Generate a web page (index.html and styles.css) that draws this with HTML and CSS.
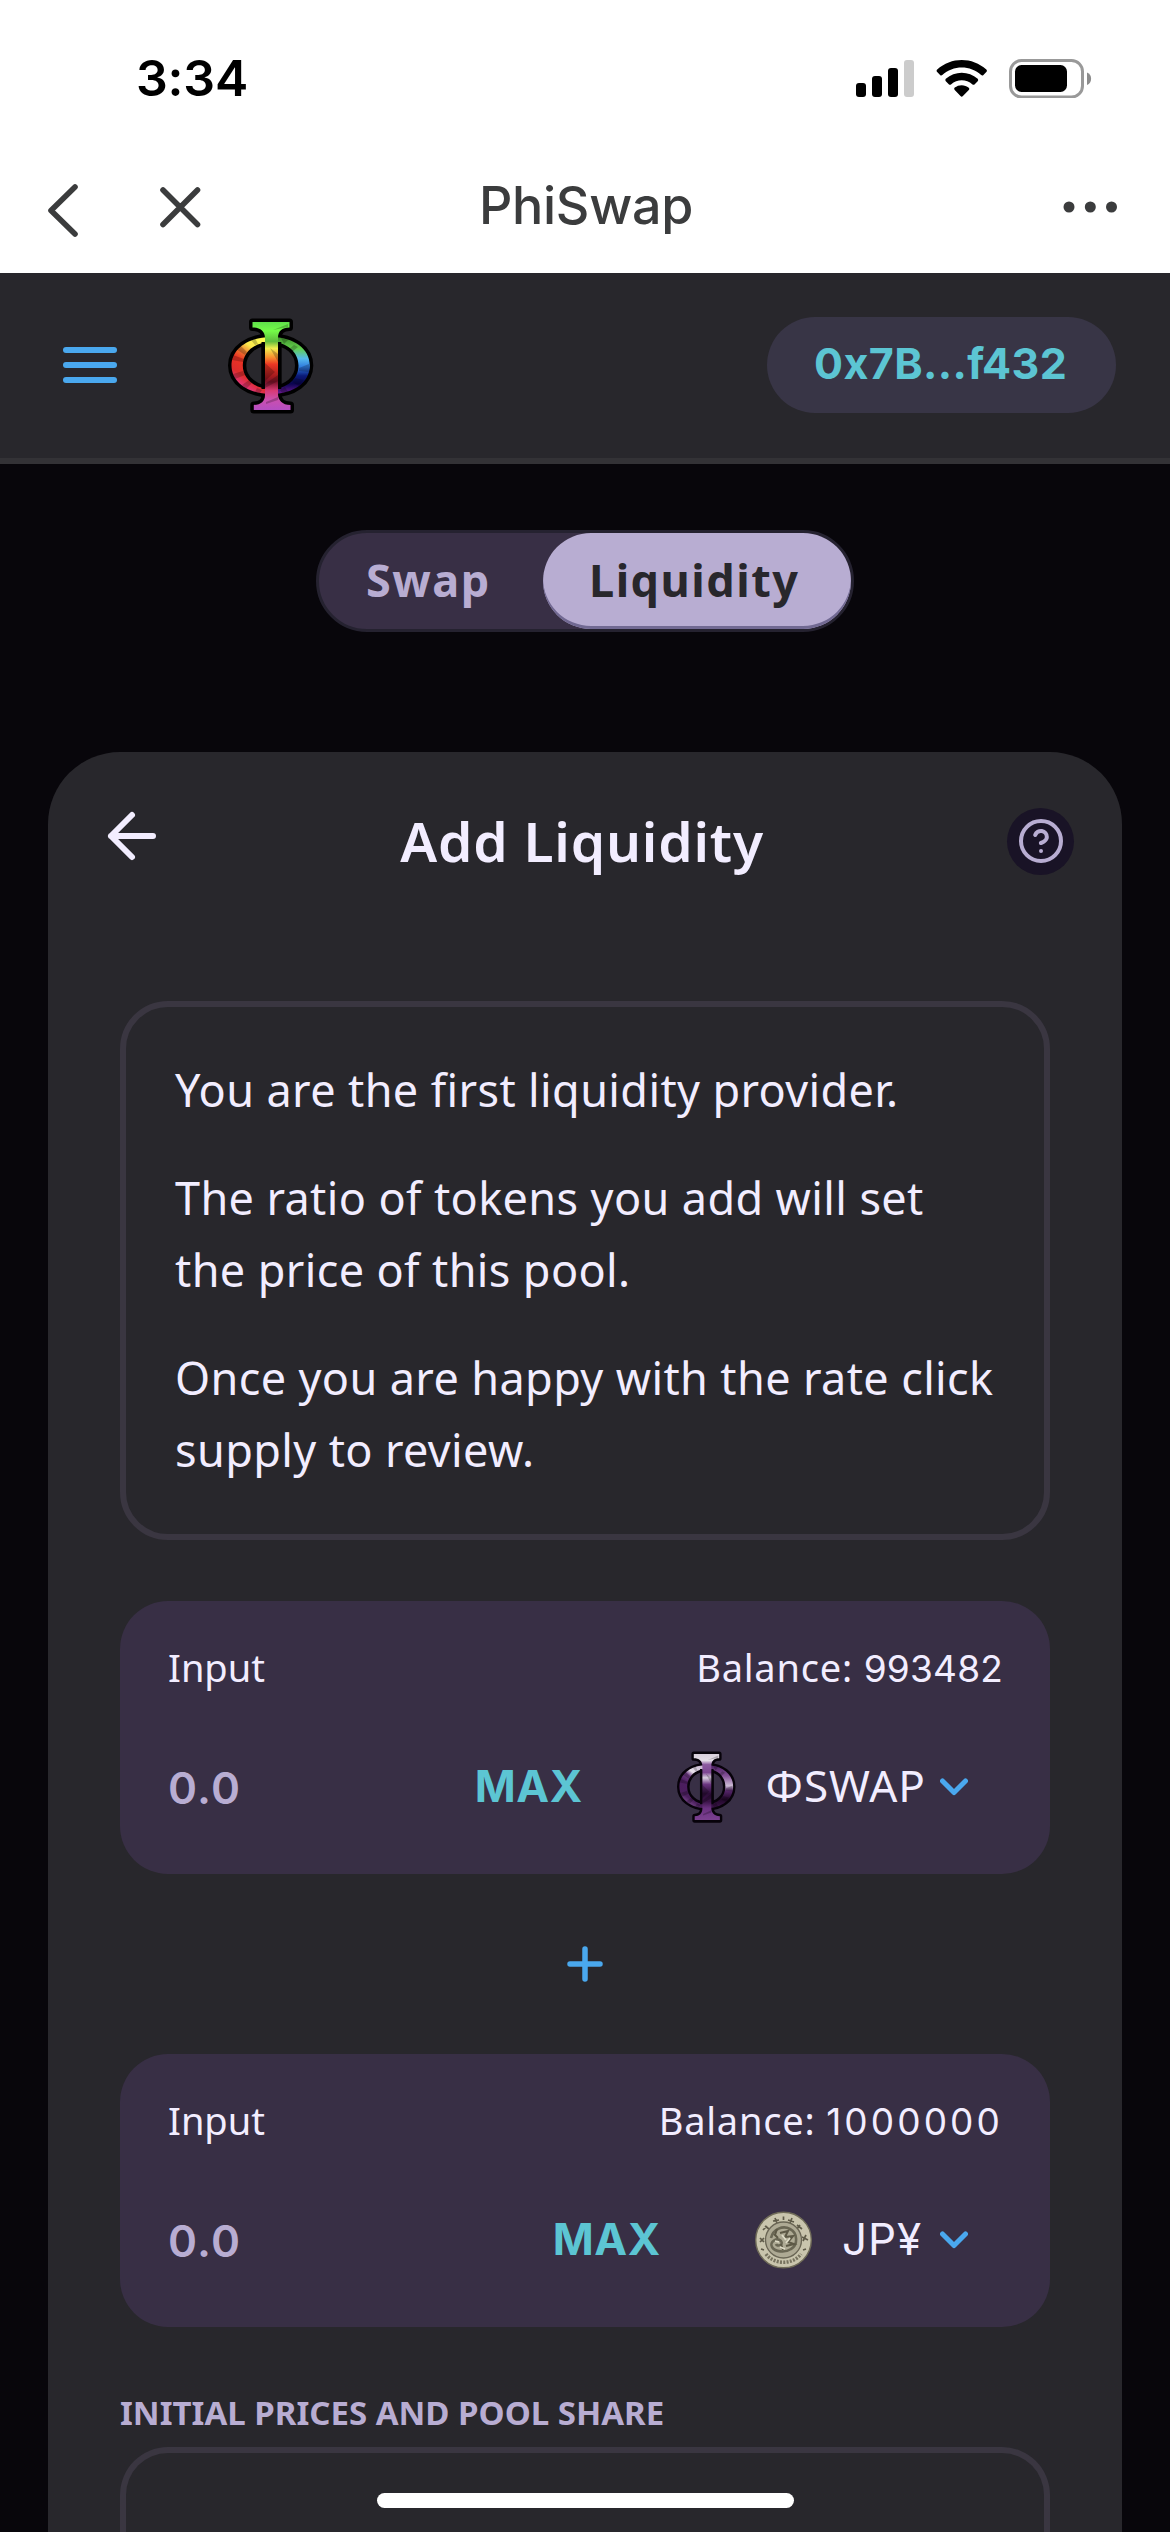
FILE: index.html
```html
<!DOCTYPE html>
<html lang="en">
<head>
<meta charset="utf-8">
<title>PhiSwap</title>
<link rel="stylesheet" href="styles.css">
</head>
<body>
<svg class="defs" width="0" height="0" aria-hidden="true">
  <defs>
    <linearGradient id="rbStem" x1="0" y1="0" x2="0" y2="1">
      <stop offset="0" stop-color="#5fe04a"/><stop offset=".1" stop-color="#74fb48"/><stop offset=".22" stop-color="#5fbb3c"/><stop offset=".3" stop-color="#f3ee4e"/><stop offset=".4" stop-color="#f7912f"/><stop offset=".48" stop-color="#ec3724"/><stop offset=".62" stop-color="#a31a1e"/><stop offset=".68" stop-color="#7a1228"/><stop offset=".78" stop-color="#d93a75"/><stop offset=".88" stop-color="#cb4fae"/><stop offset="1" stop-color="#b44ec2"/>
    </linearGradient>
    <linearGradient id="rbLeft" x1=".8" y1="0" x2=".35" y2="1">
      <stop offset="0" stop-color="#ffff54"/><stop offset=".25" stop-color="#fbe94c"/><stop offset=".4" stop-color="#ee7a2f"/><stop offset=".54" stop-color="#ea3323"/><stop offset=".75" stop-color="#dd2c2c"/><stop offset="1" stop-color="#e73ba6"/>
    </linearGradient>
    <linearGradient id="rbRight" x1="0" y1="0" x2="0" y2="1">
      <stop offset="0" stop-color="#3f8f2c"/><stop offset=".2" stop-color="#62cf4c"/><stop offset=".38" stop-color="#55b9ee"/><stop offset=".53" stop-color="#2e79dd"/><stop offset=".68" stop-color="#0a1a78"/><stop offset=".82" stop-color="#0a0450"/><stop offset="1" stop-color="#6d1a94"/>
    </linearGradient>
    <linearGradient id="puStem" x1="0" y1="0" x2="0" y2="1">
      <stop offset="0" stop-color="#d8cfdb"/><stop offset=".1" stop-color="#e4dde6"/><stop offset=".16" stop-color="#8d5ba0"/><stop offset=".28" stop-color="#7d4792"/><stop offset=".36" stop-color="#d9cfe0"/><stop offset=".46" stop-color="#6b3581"/><stop offset=".6" stop-color="#2c0d38"/><stop offset=".72" stop-color="#3b1448"/><stop offset=".82" stop-color="#6a3180"/><stop offset="1" stop-color="#7c4191"/>
    </linearGradient>
    <linearGradient id="puLeft" x1=".8" y1="0" x2=".35" y2="1">
      <stop offset="0" stop-color="#c9b6d1"/><stop offset=".25" stop-color="#e9e3ec"/><stop offset=".36" stop-color="#6f3d84"/><stop offset=".55" stop-color="#4c1d60"/><stop offset=".8" stop-color="#4a1e5c"/><stop offset="1" stop-color="#8d5aa0"/>
    </linearGradient>
    <linearGradient id="puRight" x1="0" y1="0" x2="0" y2="1">
      <stop offset="0" stop-color="#4d2062"/><stop offset=".25" stop-color="#835096"/><stop offset=".48" stop-color="#cdbcd6"/><stop offset=".6" stop-color="#55256a"/><stop offset=".8" stop-color="#210729"/><stop offset="1" stop-color="#3e164d"/>
    </linearGradient>
    <path id="phiStem" d="M24.5 4H61.5V9.5C54 9.500 50 13 50 20V76C50 82 54 87 62.500 87V92H25.800V87C33 87 37 83 37 77V20C37 13 32 9.500 24.500 9.500Z"/>
    <path id="phiL" d="M43 19C20 19 3.500 31 3.500 47.500S20 76 43 76V71C27 71 14.800 61 14.800 47.500S27 24 43 24Z"/>
    <path id="phiR" d="M43 19C66 19 81.800 31 81.800 47.500S66 76 43 76V71C59 71 70.500 61 70.500 47.500S59 24 43 24Z"/>
    <g id="phiShade" fill="#000" fill-opacity=".22">
      <path d="M5 37L16 41L15 44L4 42ZM8 31L17 37L19 34L12 27ZM23 22L27 27L30 26L27 20ZM5 56L15 53L17 57L7 61ZM14 67L21 62L24 65L18 71ZM29 70L34 72L32 75L27 74ZM53 20L56 26L60 22ZM66 27L61 31L64 34L70 29ZM81 46L71 50L71 53L81 54ZM76 62L67 60L64 64L71 68ZM57 69L52 72L54 75L60 74Z"/>
      <path d="M37 45L47 54L37 63ZM50 57L37 66V70L50 63ZM50 79L38 84V86L50 82ZM42 30L50 44V36ZM60 6L45 12L60 9Z"/>
    </g>
  </defs>
</svg>

<div class="screen">
  <div class="status">
    <span class="clock">3:34</span>
    <svg class="status-icons" width="236" height="40" viewBox="856 57 236 40">
      <rect x="856" y="82" width="10" height="14" rx="3"/>
      <rect x="872" y="75" width="10" height="21" rx="3"/>
      <rect x="888" y="67" width="10" height="29" rx="3"/>
      <rect x="904" y="59" width="10" height="37" rx="3" fill="#ccc"/>
      <path d="M937.200 68.500Q936 69.700 937.200 71L940.300 74.200Q941.300 75 942.300 74.100C953 63.900 970.500 63.900 981.200 74.100Q982.200 75 983.200 74.200L986.300 71Q987.500 69.700 986.300 68.500C972.500 55.700 951 55.700 937.200 68.500Z"/>
      <path d="M945.800 77.800Q944.700 79 945.800 80.200L949 83.400Q950 84.200 951 83.400C957.300 77.800 966.200 77.800 972.500 83.400Q973.500 84.200 974.500 83.400L977.700 80.200Q978.800 79 977.700 77.800C968.700 69.600 954.800 69.600 945.800 77.800Z"/>
      <path d="M954.700 86.600Q953.500 87.900 954.700 89.100L960.500 95.100Q961.700 96.300 962.900 95.100L968.800 89.100Q970 87.900 968.800 86.700C964.800 83.300 958.700 83.300 954.700 86.600Z"/>
      <rect x="1010.500" y="59.500" width="72" height="36.500" rx="11" fill="none" stroke="#999" stroke-width="3"/>
      <rect x="1015" y="64" width="52" height="27" rx="6.500"/>
      <path d="M1087 71.500C1092.500 73.500 1092.500 82 1087 84Z" fill="#8c8c8c"/>
    </svg>
  </div>

  <div class="nav">
    <svg class="nav-left" width="154" height="56" viewBox="47 182 154 56">
      <path d="M75 187L51 210.500L75 234"/>
      <path d="M163 190L197.500 224.500M197.500 190L163 224.500"/>
    </svg>
    <span class="nav-title">PhiSwap</span>
    <svg class="nav-dots" width="56" height="12" viewBox="0 0 56 12">
      <circle cx="6" cy="6" r="5.500"/><circle cx="27.300" cy="6" r="5.500"/><circle cx="48.500" cy="6" r="5.500"/>
    </svg>
  </div>

  <header class="header">
    <svg class="burger" width="54" height="36" viewBox="0 0 54 36">
      <rect width="54" height="6" rx="3"/><rect y="15" width="54" height="6" rx="3"/><rect y="30" width="54" height="6" rx="3"/>
    </svg>
    <svg class="logo" width="86" height="96" viewBox="0 0 86 96">
      <g stroke="#000" stroke-width="7" stroke-linejoin="round" fill="none"><use href="#phiL"/><use href="#phiR"/><use href="#phiStem"/></g>
      <use href="#phiL" fill="url(#rbLeft)"/><use href="#phiR" fill="url(#rbRight)"/>
      <path d="M35.200 24V71M51.600 24V71" stroke="#000" stroke-width="3.400"/>
      <use href="#phiStem" fill="url(#rbStem)"/><use href="#phiShade"/>
    </svg>
    <span class="wallet">0x7B...f432</span>
  </header>

  <div class="tabs">
    <span class="tab">Swap</span>
    <span class="tab tab-active">Liquidity</span>
  </div>

  <main class="card">
    <div class="card-head">
      <svg class="back" width="72" height="72" viewBox="0 0 24 24"><path d="M19 12H5M12 19L5 12L12 5"/></svg>
      <h1>Add Liquidity</h1>
      <span class="help">
        <svg width="48" height="48" viewBox="0 0 24 24"><circle cx="12" cy="12" r="10"/><path d="M9.090 9a3 3 0 0 1 5.830 1c0 2-3 3-3 3M12 17h.01"/></svg>
      </span>
    </div>

    <div class="info">
      <p>You are the first liquidity provider.</p>
      <p>The ratio of tokens you add will set<br>the price of this pool.</p>
      <p>Once you are happy with the rate click<br>supply to review.</p>
    </div>

    <section class="field">
      <div class="field-top"><span>Input</span><span class="balance">Balance: <b class="num">993482</b></span></div>
      <div class="field-row">
        <span class="amount">0.0</span>
        <span class="max">MAX</span>
        <svg class="token" width="59" height="72" viewBox="0 0 86 96" preserveAspectRatio="none">
          <g stroke="#07020a" stroke-width="7" stroke-linejoin="round" fill="none"><use href="#phiL"/><use href="#phiR"/><use href="#phiStem"/></g>
          <use href="#phiL" fill="url(#puLeft)"/><use href="#phiR" fill="url(#puRight)"/>
          <path d="M35.200 24V71M51.600 24V71" stroke="#07020a" stroke-width="3.400"/>
          <use href="#phiStem" fill="url(#puStem)"/><use href="#phiShade"/>
        </svg>
        <span class="symbol">ΦSWAP</span>
        <svg class="chevron" width="28" height="18" viewBox="0 0 28 18"><path d="M2.500 3L14 14.500L25.500 3"/></svg>
      </div>
    </section>

    <div class="plus">
      <svg width="36" height="36" viewBox="0 0 36 36"><path d="M18 3V33M3 18H33"/></svg>
    </div>

    <section class="field">
      <div class="field-top"><span>Input</span><span class="balance">Balance: <b class="num num-wide">1000000</b></span></div>
      <div class="field-row">
        <span class="amount">0.0</span>
        <span class="max">MAX</span>
        <svg class="token coin" width="57" height="58" viewBox="0 0 57 58">
          <circle cx="28.500" cy="29" r="27.800" fill="#c9c5ad" stroke="#6f6b58" stroke-width="1.400"/>
          <path d="M28.500 5.500V9M10 15L14 18M8 19L12 15M20 7L22 12M18 10L24 9M37 7L35 12M33 9L39 11M45 14L42 18M42 14L47 18M51 24L48 30M47 26L53 29M5 27L9 31M5 31L9 27M51 38L48 39M6 38L9 39" fill="none" stroke="#5f5b49" stroke-width="1.700"/>
          <path d="M11 43C19 54 38 54 46 43" fill="none" stroke="#77735f" stroke-width="3.500" stroke-dasharray="2 1.300"/>
          <circle cx="28.500" cy="29" r="18" fill="#aeaa94" stroke="#6a6655" stroke-width="1.300"/>
          <path d="M16 27C18 18 28 14 35 18C43 22 43 34 36 38C30 42 20 41 17 36C14 31 22 26 26 30C29 34 22 36 21 33" fill="none" stroke="#6a6754" stroke-width="2.600"/>
          <path d="M25 22L33 20L30 26L38 25L33 31L39 33L31 35M19 23L23 27M28 39L26 33M22 18L20 24" fill="none" stroke="#5d5946" stroke-width="2"/>
          <path d="M27 24L31 29M35 27L31 32M20 30L24 31M25 36L30 38" stroke="#dedbc6" stroke-width="1.800"/>
        </svg>
        <span class="symbol symbol-jpy">JP¥</span>
        <svg class="chevron" width="28" height="18" viewBox="0 0 28 18"><path d="M2.500 3L14 14.500L25.500 3"/></svg>
      </div>
    </section>

    <h2>INITIAL PRICES AND POOL SHARE</h2>
    <div class="prices"></div>
  </main>
  <div class="home-bar"></div>
</div>
</body>
</html>
```
FILE: styles.css
```css
* { box-sizing: border-box; }
body { margin: 0; background: #08060b; font-family: "Noto Sans", sans-serif; }
svg { display: block; flex: none; }
.defs { position: absolute; }

.screen { position: relative; width: 1170px; height: 2532px; overflow: hidden; display: flex; flex-direction: column; background: #08060b; }

.status { flex: none; height: 156px; background: #fff; display: flex; align-items: center; justify-content: space-between; padding: 0 78px 0 136px; }
.clock { font: 600 50px/60px Inter, sans-serif; color: #000; letter-spacing: -0.2px; }
.status-icons { margin-top: -1px; }

.nav { flex: none; height: 117px; background: #fff; display: flex; align-items: center; padding: 0 51px 17px 47px; }
.nav-left { margin-top: 8px; fill: none; stroke: #3b3c3d; stroke-width: 5.6px; stroke-linecap: round; stroke-linejoin: round; }
.nav-title { flex: 1; margin-right: 92px; font: 450 52px/60px Inter, sans-serif; color: #3b3c3d; text-align: center; letter-spacing: -0.3px; }
.nav-dots { fill: #3b3c3d; margin-top: 2px; }

.header { flex: none; height: 191px; background: #28272c; border-bottom: 6px solid #333236; display: flex; align-items: center; padding: 0 54px 0 63px; }
.burger { fill: #4aa8ee; margin-top: -1px; }
.logo { margin-left: 111px; }
.wallet { margin: -1px 0 0 auto; width: 349px; height: 96px; border-radius: 48px; background: #383546; color: #5cc5d3; font: 700 43px/93px Inter, sans-serif; padding-left: 47px; letter-spacing: 0.4px; }

.tabs { flex: none; align-self: center; width: 538px; height: 102px; margin-top: 66px; border: 3px solid #252230; border-radius: 51px; background: #382f45; display: flex; font-size: 45px; font-weight: 700; line-height: 93px; letter-spacing: 1.5px; color: #b8add2; }
.tab { flex: 1; padding-left: 47px; }
.tab-active { flex: none; width: 308px; padding-left: 46px; border-radius: 48px; background: #b8add2; color: #28272c; box-shadow: inset 0 -3px 0 #716992; }

.card { flex: none; height: 1780px; margin: 120px 48px 0; padding: 0 72px; border-radius: 72px 72px 0 0; background: #28272c; color: #f2edff; display: flex; flex-direction: column; }
.card-head { height: 178px; margin: 0 -24px; display: flex; align-items: center; }
.back { margin-top: -10px; fill: none; stroke: #f2edff; stroke-width: 2px; stroke-linecap: round; stroke-linejoin: round; }
h1 { flex: 1; margin: 0; padding-right: 11px; text-align: center; font-size: 55px; line-height: 72px; font-weight: 600; letter-spacing: 0.8px; }
.help { width: 67px; height: 67px; border-radius: 50%; background: #191326; display: flex; align-items: center; justify-content: center; }
.help svg { fill: none; stroke: #b8add2; stroke-width: 2px; stroke-linecap: round; stroke-linejoin: round; }

.info { margin-top: 71px; height: 539px; border: 6px solid #3a3641; border-radius: 48px; padding: 47px 0 0 49px; font-size: 45px; font-weight: 450; line-height: 72px; letter-spacing: 0.38px; white-space: nowrap; }
.info p { margin: 0 0 36px; }

.field { height: 273px; border-radius: 48px; background: #382f45; padding: 36px 47px 0 48px; }
.info + .field { margin-top: 61px; }
.field-top { height: 60px; display: flex; justify-content: space-between; font-size: 38px; font-weight: 450; line-height: 60px; }
.balance { letter-spacing: 0.8px; }
.num { font-family: Inter, sans-serif; font-size: 37px; font-weight: 400; letter-spacing: 0.2px; }
.num-wide { letter-spacing: 3.1px; }
.field-row { height: 74px; margin-top: 53px; padding-right: 35px; display: flex; align-items: center; }
.amount { flex: 1; margin-top: 2px; font: 600 44px/60px Inter, sans-serif; letter-spacing: 1.2px; color: #b8add2; }
.max { margin-top: -3px; font: 700 44px/60px Inter, sans-serif; letter-spacing: 0.6px; color: #5cc5d3; }
.token { margin-left: 94px; }
.symbol { margin: -4px 14px 0 30px; font-size: 44px; font-weight: 450; line-height: 60px; letter-spacing: 1px; }
.symbol-jpy { font-family: Inter, sans-serif; font-weight: 400; letter-spacing: 0.9px; margin: -2px 18px 0 30px; }
.chevron { fill: none; stroke: #4aa8ee; stroke-width: 5px; stroke-linecap: round; stroke-linejoin: round; }

.plus { height: 180px; display: flex; align-items: center; justify-content: center; }
.plus svg { fill: none; stroke: #4aa8ee; stroke-width: 5.5px; stroke-linecap: round; }

h2 { margin: 56px 0 4px; font-size: 33px; line-height: 60px; font-weight: 700; color: #b8add2; white-space: nowrap; }
.prices { flex: 1; border: 6px solid #3a3641; border-bottom: 0; border-radius: 48px 48px 0 0; }
.home-bar { position: absolute; left: 377px; top: 2493px; width: 417px; height: 15px; border-radius: 8px; background: #fff; }
```
